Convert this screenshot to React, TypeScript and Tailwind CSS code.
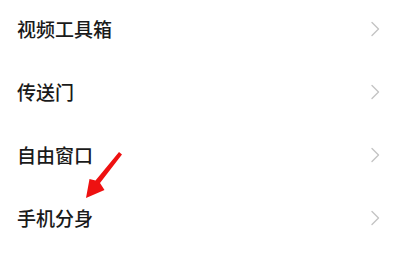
const items = ["视频工具箱", "传送门", "自由窗口", "手机分身"];

function Chevron() {
  return (
    <svg width="10" height="16" viewBox="0 0 10 16" fill="none" className="shrink-0">
      <path d="M2 1.5 L8.5 8 L2 14.5" stroke="#c4c4c4" strokeWidth="1.4" strokeLinecap="round" strokeLinejoin="round" />
    </svg>
  );
}

function RedArrow() {
  return (
    <svg
      width="400"
      height="268"
      viewBox="0 0 400 268"
      className="pointer-events-none absolute left-0 top-0"
    >
      <path d="M119 152 L122 154.5 L100 183 L104.5 190 L86 198 L89.5 179 L95.5 180.5 Z" fill="#ee1111" />
    </svg>
  );
}

export default function App() {
  return (
    <div className="relative h-[268px] w-[400px] overflow-hidden bg-white" style={{ fontFamily: '"Noto Sans CJK SC", "Noto Sans", sans-serif' }}>
      <div className="-mt-[3px] flex flex-col">
        {items.map((label) => (
          <div key={label} className="flex h-[63px] items-center justify-between pl-[17px] pr-[20px]">
            <span className="text-[19px] font-medium leading-none text-[#1a1a1a]">{label}</span>
            <Chevron />
          </div>
        ))}
      </div>
      <RedArrow />
    </div>
  );
}
